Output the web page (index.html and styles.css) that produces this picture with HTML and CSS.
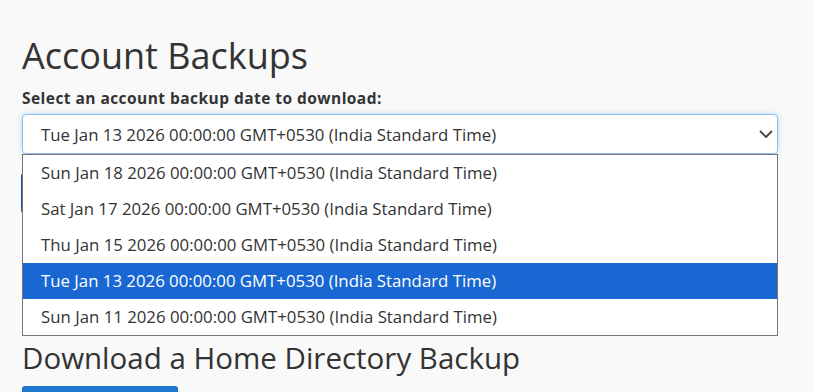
FILE: index.html
```html
<!DOCTYPE html>
<html>
<head>
<meta charset="utf-8">
<link rel="stylesheet" href="styles.css">
</head>
<body>
<main class="page">
  <h1 class="title">Account Backups</h1>
  <label class="label">Select an account backup date to download:</label>
  <div class="picker">
    <div class="select">
      <span class="select-text">Tue Jan 13 2026 00:00:00 GMT+0530 (India Standard Time)</span>
      <svg class="chev" width="14" height="9" viewBox="0 0 14 9"><path d="M1.5 1.5 L7 7 L12.5 1.5" fill="none" stroke="#444" stroke-width="1.8" stroke-linecap="round" stroke-linejoin="round"/></svg>
    </div>
    <ul class="options">
      <li class="opt">Sun Jan 18 2026 00:00:00 GMT+0530 (India Standard Time)</li>
      <li class="opt">Sat Jan 17 2026 00:00:00 GMT+0530 (India Standard Time)</li>
      <li class="opt">Thu Jan 15 2026 00:00:00 GMT+0530 (India Standard Time)</li>
      <li class="opt opt-active">Tue Jan 13 2026 00:00:00 GMT+0530 (India Standard Time)</li>
      <li class="opt">Sun Jan 11 2026 00:00:00 GMT+0530 (India Standard Time)</li>
    </ul>
  </div>
  <button class="btn btn-dark">Download</button>
  <h2 class="subtitle">Download a Home Directory Backup</h2>
  <button class="btn btn-blue">Home Directory</button>
</main>
</body>
</html>
```
FILE: styles.css
```css
html, body {
  margin: 0;
  padding: 0;
  background: #f9f9f9;
  overflow: hidden;
}
.page {
  padding: 32px 36px 0 22px;
  font-family: "Open Sans", "Liberation Sans", sans-serif;
  color: #333;
  display: flex;
  flex-direction: column;
  align-items: flex-start;
}
.title {
  font-size: 36px;
  font-weight: 400;
  line-height: 48px;
  margin: 0 0 8px 0;
  color: #333;
}
.label {
  font-size: 15.5px;
  font-weight: 700;
  letter-spacing: 0.45px;
  line-height: 20px;
  margin: 0 0 6px 0;
  color: #333;
}
.picker {
  position: relative;
  width: 756px;
}
.select {
  box-sizing: border-box;
  height: 40px;
  width: 100%;
  background: #fff;
  border: 1px solid #8ebef0;
  border-radius: 4px;
  box-shadow: 0 0 5px rgba(102, 170, 238, 0.45);
  display: flex;
  align-items: center;
  justify-content: space-between;
  padding: 0 4px 0 18px;
}
.select-text {
  font-size: 16.8px;
  color: #333;
}
.chev {
  margin-right: 0;
}
.options {
  position: absolute;
  top: 40px;
  left: 0;
  width: 100%;
  box-sizing: border-box;
  margin: 0;
  padding: 0;
  list-style: none;
  background: #fff;
  border: 1px solid #777;
  z-index: 2;
}
.opt {
  height: 36px;
  line-height: 36px;
  padding-left: 18px;
  font-size: 16.8px;
  color: #333;
}
.opt-active {
  background: #1967d2;
  color: #fff;
}
.btn {
  font-family: "Open Sans", "Liberation Sans", sans-serif;
  font-size: 16px;
  color: #fff;
  border: none;
  border-radius: 3px;
  height: 40px;
  padding: 0 20px;
}
.btn-dark {
  margin: 19px 0 0 -1px;
  background: #155a9c;
  width: 150px;
}
.subtitle {
  font-size: 29.5px;
  font-weight: 400;
  line-height: 40px;
  margin: 125px 0 8px 0;
  color: #333;
}
.btn-blue {
  background: #1f77d0;
  width: 156px;
  height: 46px;
}
```
